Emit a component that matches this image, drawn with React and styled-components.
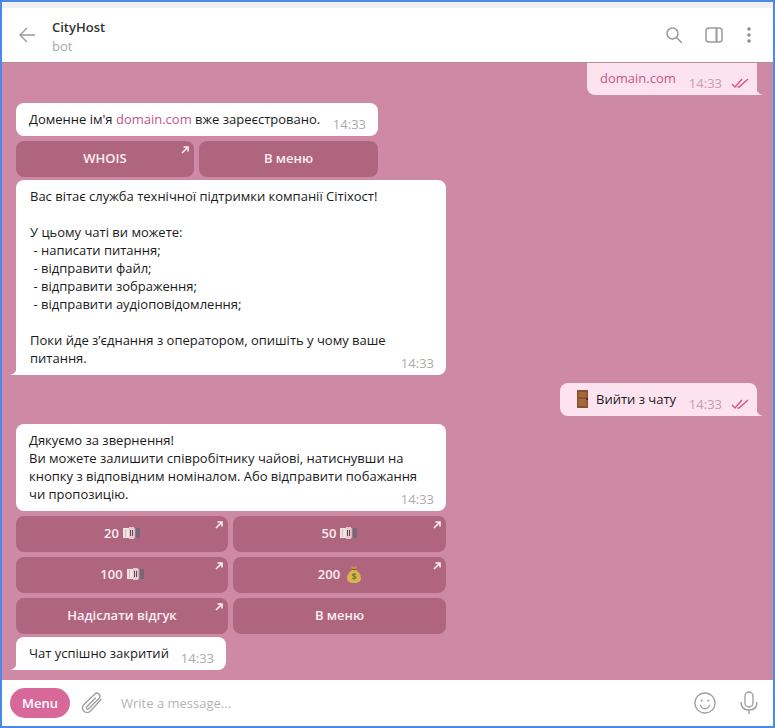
import React from 'react'
import styled, { createGlobalStyle } from 'styled-components'

const Global = createGlobalStyle`
  html, body { margin: 0; padding: 0; background: #4a8ae6; }
  * { box-sizing: border-box; }
`

const Frame = styled.div`
  width: 775px; height: 728px; border: 2px solid #4a8ae6;
  display: flex; flex-direction: column; overflow: hidden;
  font-family: "Open Sans", sans-serif; font-size: 13px; color: #1a1a1a;
`
const TopStrip = styled.div`height: 6px; background: #f0f0f0; flex: none;`
const Header = styled.header`
  height: 55px; flex: none; background: #fff; border-bottom: 1px solid #b98aa0;
  display: flex; align-items: center; padding: 0 22px 0 15px;
`
const Back = styled.div`width: 35px; display: flex; flex: none;`
const Peer = styled.div`flex: 1; display: flex; flex-direction: column; gap: 1px; margin-top: 3px;`
const PeerName = styled.div`font-weight: 600; font-size: 13px; line-height: 18px; color: #333;`
const PeerStatus = styled.div`font-size: 13px; line-height: 18px; color: #a8a8a8;`
const Tools = styled.div`display: flex; align-items: center; gap: 22px; color: #9a9a9a;`
const Dots = styled.svg`margin-left: 2px;`

const Chat = styled.main`
  flex: 1; background: #ce8aa5; padding: 0 16px 0 14px; display: flex; flex-direction: column; min-height: 0;
`
const Bubble = styled.div`
  position: relative; flex: none;
  align-self: ${p => (p.$out ? 'flex-end' : 'flex-start')};
  width: ${p => p.$w}px;
  margin-top: ${p => p.$top || 0}px;
  background: ${p => (p.$out ? '#fde3ef' : '#fff')};
  border-radius: ${p => (p.$first ? '0 0 8px 8px' : '8px')};
  border-bottom-left-radius: ${p => (p.$tail && !p.$out ? 0 : 8)}px;
  border-bottom-right-radius: ${p => (p.$out ? 0 : 8)}px;
  padding: ${p => p.$pad || '7px 13px 8px 13px'};
  line-height: 18px;
`
const Tail = styled.svg`
  position: absolute; bottom: 0; width: 7px; height: 9px;
  ${p => (p.$out ? 'right: -6px;' : 'left: -6px; transform: scaleX(-1);')}
`
const Line = styled.div`white-space: pre;`
const ExitLine = styled.div`display: flex; align-items: center; gap: 7px; height: 18px; padding-left: 4px;`
const Link = styled.span`color: #c2568a;`
const Meta = styled.div`
  position: absolute; right: ${p => (p.$out ? 8 : 12)}px; bottom: 3px;
  display: flex; align-items: center; gap: 9px;
  font-size: 13px; line-height: 18px; color: ${p => (p.$out ? '#c99bb0' : '#aaa')};
`
const Keys = styled.div`
  flex: none; width: ${p => p.$w}px; margin-top: 5px;
  display: grid; grid-template-columns: ${p => Math.floor((p.$w - 5) / 2)}px 1fr; gap: 5px;
  margin-bottom: ${p => p.$bottom || 0}px;
`
const Key = styled.div`
  position: relative; height: 36px; border-radius: 8px; background: #b0657f; padding-bottom: 2px;
  display: flex; align-items: center; justify-content: center; gap: ${p => p.$gap || 4}px;
  font-weight: 600; font-size: 13px; color: #fbeef3;
`
const KeyCorner = styled.svg`position: absolute; top: 5px; right: 5px; width: 8px; height: 8px;`

const Footer = styled.footer`
  height: 46px; flex: none; background: #fff; display: flex; align-items: center; padding: 0 15px 0 8px;
`
const MenuButton = styled.div`
  width: 60px; height: 30px; border-radius: 15px; background: #d9689a; color: #fff;
  display: flex; align-items: center; justify-content: center; font-weight: 600; font-size: 13px; flex: none;
`
const Clip = styled.div`display: flex; margin-left: 10px; flex: none;`
const Input = styled.div`flex: 1; margin-left: 17px; color: #b4b4b4; font-size: 13px;`
const Right = styled.div`display: flex; align-items: center; gap: 24px;`

const TailShape = ({ out }) => (
  <Tail $out={out} viewBox="0 0 7 9">
    <path d="M0 0C0 4 2 8 7 9H0Z" fill={out ? '#fde3ef' : '#fff'} />
  </Tail>
)

const Ticks = () => (
  <svg width="18" height="10" viewBox="0 0 18 10" fill="none" stroke="#d2568c" strokeWidth="1.4">
    <path d="M1 6l3 3 7-8M6.5 9l1.5 0 9-8" />
  </svg>
)

const Arrow = () => (
  <KeyCorner viewBox="0 0 8 8" fill="none" stroke="#fbeef3" strokeWidth="1.6">
    <path d="M1 7L7 1M2.5 1H7V5.5" />
  </KeyCorner>
)

// a fan of banknotes, the emoji is not available here
const Cash = () => (
  <svg width="17" height="12" viewBox="0 0 17 12">
    <rect x="0" y="1" width="6" height="10" fill="#efe3e4" />
    <rect x="6" y="0" width="5" height="12" fill="#e6c9cf" />
    <rect x="11" y="1" width="1.5" height="10" fill="#d8b4bd" />
    <rect x="12.5" y="1" width="4.5" height="10" fill="#7a6678" />
    <rect x="7" y="3" width="1" height="6" fill="#5b4a50" />
    <rect x="9" y="3" width="1" height="6" fill="#5b4a50" />
    <rect x="2" y="2" width="1" height="8" fill="#cdbcbe" />
  </svg>
)

const Bag = () => (
  <svg width="14" height="18" viewBox="0 0 14 18">
    <path d="M4 1l3 1 3-1-1.5 4h-3z" fill="#c9953a" />
    <path d="M5 5h4c3 2 5 5 5 8 0 3-2 5-7 5s-7-2-7-5c0-3 2-6 5-8z" fill="#dcb24a" />
    <path d="M5 4.5h4" stroke="#7a5a22" strokeWidth="1" />
    <text x="7" y="15" textAnchor="middle" fontSize="9" fontWeight="700" fill="#5f7a3a" fontFamily="Open Sans">$</text>
  </svg>
)

const Door = () => (
  <svg width="12" height="18" viewBox="0 0 12 18">
    <rect width="11" height="18" fill="#8a5030" />
    <rect x="1.5" y="2" width="8" height="5" fill="#a5683e" />
    <rect x="1.5" y="9" width="8" height="7" fill="#a5683e" />
    <rect x="9" y="8" width="2" height="2" fill="#4f2d1a" />
  </svg>
)

export default function App() {
  return (
    <Frame>
      <Global />
      <TopStrip />
      <Header>
        <Back>
          <svg width="20" height="20" viewBox="0 0 20 20" fill="none" stroke="#9a9a9a" strokeWidth="1.4">
            <path d="M18 10H3M10 3l-7 7 7 7" />
          </svg>
        </Back>
        <Peer>
          <PeerName>CityHost</PeerName>
          <PeerStatus>bot</PeerStatus>
        </Peer>
        <Tools>
          <svg width="18" height="18" viewBox="0 0 18 18" fill="none" stroke="#9a9a9a" strokeWidth="1.5">
            <circle cx="7.5" cy="7.5" r="5.5" />
            <path d="M11.5 11.5L17 17" />
          </svg>
          <svg width="18" height="16" viewBox="0 0 18 16" fill="none" stroke="#9a9a9a" strokeWidth="1.5">
            <rect x="1" y="1" width="16" height="14" rx="3" />
            <path d="M11.5 1v14" strokeWidth="2" />
          </svg>
          <Dots width="4" height="16" viewBox="0 0 4 16" fill="#8f8f8f">
            <circle cx="2" cy="2" r="1.8" />
            <circle cx="2" cy="8" r="1.8" />
            <circle cx="2" cy="14" r="1.8" />
          </Dots>
        </Tools>
      </Header>
      <Chat>
        <Bubble $out $first $w={170} $pad="6px 13px 8px 13px">
          <Line><Link>domain.com</Link></Line>
          <Meta $out>14:33 <Ticks /></Meta>
          <TailShape out />
        </Bubble>
        <Bubble $top={8} $w={362}>
          <Line>Доменне ім'я <Link>domain.com</Link> вже зареєстровано.</Line>
          <Meta>14:33</Meta>
        </Bubble>
        <Keys $w={362}>
          <Key>WHOIS<Arrow /></Key>
          <Key>В меню</Key>
        </Keys>
        <Bubble $top={3} $w={430} $tail $pad="7px 13px 8px 14px">
          <Line>Вас вітає служба технічної підтримки компанії Сітіхост!</Line>
          <Line> </Line>
          <Line>У цьому чаті ви можете:</Line>
          <Line> - написати питання;</Line>
          <Line> - відправити файл;</Line>
          <Line> - відправити зображення;</Line>
          <Line> - відправити аудіоповідомлення;</Line>
          <Line> </Line>
          <Line>Поки йде з’єднання з оператором, опишіть у чому ваше</Line>
          <Line>питання.</Line>
          <Meta>14:33</Meta>
          <TailShape />
        </Bubble>
        <Bubble $out $top={8} $w={197}>
          <ExitLine><Door />Вийти з чату</ExitLine>
          <Meta $out>14:33 <Ticks /></Meta>
          <TailShape out />
        </Bubble>
        <Bubble $top={8} $w={430}>
          <Line>Дякуємо за звернення!</Line>
          <Line>Ви можете залишити співробітнику чайові, натиснувши на</Line>
          <Line>кнопку з відповідним номіналом. Або відправити побажання</Line>
          <Line>чи пропозицію.</Line>
          <Meta>14:33</Meta>
        </Bubble>
        <Keys $w={430} $bottom={3}>
          <Key>20 <Cash /><Arrow /></Key>
          <Key>50 <Cash /><Arrow /></Key>
          <Key>100 <Cash /><Arrow /></Key>
          <Key $gap={7}>200 <Bag /><Arrow /></Key>
          <Key>Надіслати відгук<Arrow /></Key>
          <Key>В меню</Key>
        </Keys>
        <Bubble $w={210} $tail>
          <Line>Чат успішно закритий</Line>
          <Meta>14:33</Meta>
          <TailShape />
        </Bubble>
      </Chat>
      <Footer>
        <MenuButton>Menu</MenuButton>
        <Clip>
          <svg width="24" height="24" viewBox="0 0 24 24" fill="none" stroke="#a0a0a0" strokeWidth="1.4" strokeLinecap="round">
            <path d="M21 8.5L10.5 20a4.6 4.6 0 0 1-6.8-6.2L14.6 3.2a3 3 0 0 1 4.4 4.2L8.8 17.6a1.4 1.4 0 0 1-2.1-1.9L15.5 7" />
          </svg>
        </Clip>
        <Input>Write a message...</Input>
        <Right>
          <svg width="22" height="22" viewBox="0 0 23 23" fill="none" stroke="#a0a0a0" strokeWidth="1.4">
            <circle cx="11.5" cy="11.5" r="10.5" />
            <circle cx="8" cy="9" r="1.1" fill="#a0a0a0" stroke="none" />
            <circle cx="15" cy="9" r="1.1" fill="#a0a0a0" stroke="none" />
            <path d="M6.5 13.5c1 3 3 4 5 4s4-1 5-4" />
          </svg>
          <svg width="18" height="24" viewBox="0 0 18 24" fill="none" stroke="#a0a0a0" strokeWidth="1.4">
            <rect x="5" y="1" width="8" height="15" rx="4" />
            <path d="M1 11c0 5 3 8 8 8s8-3 8-8M9 19v4" />
          </svg>
        </Right>
      </Footer>
    </Frame>
  )
}
